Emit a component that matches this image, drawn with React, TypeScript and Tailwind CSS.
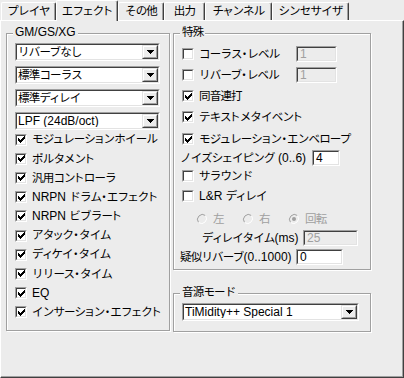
import React from 'react';

type Kids = { className?: string; inner?: string; children?: React.ReactNode };

// Small kana, the middle dot and ト are narrow in the old UI font: give those proportional metrics
const NARROW = /[・トァィゥェォャュョッ]/;

// Japanese runs get a slightly narrower setting so they match the old UI font's advance widths
const T: React.FC<{ s: string }> = ({ s }) => (
  <>
    {s.split(/([\u3000-\u9fff\uff00-\uffef]+)/).map((p, i) =>
      i % 2 ? (
        <span key={i} className="text-[11.5px] tracking-[-0.8px]">
          {Array.from(p).map((c, j) =>
            NARROW.test(c) ? (
              <span key={j} className="tracking-normal [font-feature-settings:'palt']">
                {c}
              </span>
            ) : (
              c
            )
          )}
        </span>
      ) : (
        p
      )
    )}
  </>
);

// 2px classic sunken frame (edit boxes, combo boxes, check boxes)
const Sunken: React.FC<Kids> = ({ className = '', inner = '', children }) => (
  <div className={`border border-t-[#a0a0a0] border-l-[#a0a0a0] border-r-white border-b-white ${className}`}>
    <div className={`h-full flex items-center border border-t-[#404040] border-l-[#404040] border-r-[#e3e3e3] border-b-[#e3e3e3] ${inner}`}>
      {children}
    </div>
  </div>
);

const Arrow = () => (
  <svg width="7" height="4" viewBox="0 0 7 4">
    <path d="M0 0h7v1H0z M1 1h5v1H1z M2 2h3v1H2z M3 3h1v1H3z" fill="#000" />
  </svg>
);

const Select: React.FC<{ value: string; className?: string }> = ({ value, className = '' }) => (
  <Sunken className={`h-[18px] ${className}`} inner="bg-white">
    <span className="flex-1 pl-[1px] leading-none whitespace-nowrap overflow-hidden">
      <T s={value} />
    </span>
    <div className="h-full w-[16px] border border-t-[#e3e3e3] border-l-[#e3e3e3] border-r-[#404040] border-b-[#404040]">
      <div className="h-full flex items-center justify-center bg-[#ececec] border border-t-white border-l-white border-r-[#a0a0a0] border-b-[#a0a0a0]">
        <Arrow />
      </div>
    </div>
  </Sunken>
);

const Check: React.FC<{ on?: boolean }> = ({ on }) => (
  <Sunken className="w-[12px] h-[12px] shrink-0" inner="bg-white justify-center">
    {on && (
      <svg width="7" height="7" viewBox="0 0 7 7">
        <path
          d="M0 2h1v3H0z M1 3h1v3H1z M2 4h1v3H2z M3 3h1v3H3z M4 2h1v3H4z M5 1h1v3H5z M6 0h1v3H6z"
          fill="#000"
        />
      </svg>
    )}
  </Sunken>
);

const Radio: React.FC<{ on?: boolean; label: string }> = ({ on, label }) => (
  <div className="w-[46px] flex items-center gap-[5px] text-[#a0a0a0]">
    <svg width="12" height="12" viewBox="0 0 12 12" className="shrink-0">
      <circle cx="6" cy="6" r="5" fill="#ececec" />
      <path d="M9.5 2.5A5 5 0 0 0 2.5 9.5" stroke="#a0a0a0" fill="none" />
      <path d="M2.5 9.5A5 5 0 0 0 9.5 2.5" stroke="#ffffff" fill="none" />
      {on && <circle cx="6" cy="6" r="2" fill="#a0a0a0" />}
    </svg>
    <span className="leading-none">
      <T s={label} />
    </span>
  </div>
);

const Field: React.FC<{ value: string; off?: boolean; className?: string }> = ({ value, off, className = '' }) => (
  <Sunken className={`h-[16px] ${className}`} inner={off ? 'bg-[#ececec] text-[#a0a0a0] pl-[2px]' : 'bg-white pl-[2px]'}>
    <span className="leading-none">{value}</span>
  </Sunken>
);

const Group: React.FC<Kids & { label: string }> = ({ label, className = '', children }) => (
  <div className={`relative border border-[#a0a0a0] shadow-[inset_1px_1px_0_#fff,1px_1px_0_#fff] ${className}`}>
    <span className="absolute left-[6px] top-[-9px] px-[2px] bg-[#ececec] leading-[14px] whitespace-nowrap">
      <T s={label} />
    </span>
    {children}
  </div>
);

const CheckRow: React.FC<{ label: string; on?: boolean }> = ({ label, on }) => (
  <div className="flex items-center gap-[5px]">
    <Check on={on} />
    <span className="leading-none whitespace-nowrap">
      <T s={label} />
    </span>
  </div>
);

const Label: React.FC<{ s: string; className: string }> = ({ s, className }) => (
  <span className={`${className} shrink-0 leading-none whitespace-nowrap`}>
    <T s={s} />
  </span>
);

const tabs = [
  { name: 'プレイヤ', w: 'w-[55px]' },
  { name: 'エフェクト', w: 'w-[62px]', active: true },
  { name: 'その他', w: 'w-[46px]' },
  { name: '出力', w: 'w-[41px]' },
  { name: 'チャンネル', w: 'w-[67px]' },
  { name: 'シンセサイザ', w: 'w-[77px]' },
];

const gmChecks = [
  'モジュレーションホイール',
  'ポルタメント',
  '汎用コントローラ',
  'NRPN ドラム・エフェクト',
  'NRPN ビブラート',
  'アタック・タイム',
  'ディケイ・タイム',
  'リリース・タイム',
  'EQ',
  'インサーション・エフェクト',
];

export default function App() {
  return (
    <div className="w-[404px] h-[378px] overflow-hidden bg-[#ececec] text-[12px] text-black [font-family:'Liberation_Sans','Noto_Sans_CJK_JP',sans-serif]">
      {/* Tab strip */}
      <div className="h-[20px] flex items-end pl-[1px]">
        {tabs.map((t) => (
          <div
            key={t.name}
            className={`${t.w} flex items-center justify-center rounded-t-[2px] border-t border-l border-r border-t-white border-l-white border-r-[#404040] shadow-[inset_-1px_0_0_#a0a0a0] bg-[#ececec] ${
              t.active ? 'h-[21px] -mb-px relative z-10' : 'h-[18px]'
            }`}
          >
            <span className="leading-none whitespace-nowrap">
              <T s={t.name} />
            </span>
          </div>
        ))}
      </div>

      {/* Page */}
      <div className="h-[358px] flex gap-[3px] pl-[5px] pt-[12px] border border-t-white border-l-white border-r-[#404040] border-b-[#404040] shadow-[inset_-1px_-1px_0_#a0a0a0]">
        <Group label="GM/GS/XG" className="w-[164px] h-[298px] pt-[9px] pl-[8px]">
          <div className="flex flex-col gap-[5px] w-[145px]">
            <Select value="リバーブなし" />
            <Select value="標準コーラス" />
            <Select value="標準ディレイ" />
            <Select value="LPF (24dB/oct)" />
          </div>
          <div className="flex flex-col">
            {gmChecks.map((c) => (
              <div key={c} className="h-[19.2px] flex items-center">
                <CheckRow label={c} on />
              </div>
            ))}
          </div>
        </Group>

        <div className="w-[198px] flex flex-col">
          <Group label="特殊" className="h-[237px] pt-[11px]">
            <div className="h-[18px] flex items-center ml-[8px]">
              <div className="w-[114px] shrink-0">
                <CheckRow label="コーラス・レベル" />
              </div>
              <Field value="1" off className="w-[41px]" />
            </div>
            <div className="h-[18px] mt-[3px] flex items-center ml-[8px]">
              <div className="w-[114px] shrink-0">
                <CheckRow label="リバーブ・レベル" />
              </div>
              <Field value="1" off className="w-[41px]" />
            </div>
            <div className="h-[18px] mt-[3px] flex items-center ml-[8px]">
              <CheckRow label="同音連打" on />
            </div>
            <div className="h-[18px] mt-[3px] flex items-center ml-[8px]">
              <CheckRow label="テキストメタイベント" on />
            </div>
            <div className="h-[18px] mt-[4px] flex items-center ml-[8px]">
              <CheckRow label="モジュレーション・エンベロープ" on />
            </div>
            <div className="h-[18px] mt-[1px] flex items-center ml-[6px]">
              <Label s="ノイズシェイピング (0..6)" className="w-[132px]" />
              <Field value="4" className="w-[28px]" />
            </div>
            <div className="h-[18px] flex items-center ml-[8px]">
              <CheckRow label="サラウンド" />
            </div>
            <div className="h-[18px] mt-[2px] flex items-center ml-[8px]">
              <CheckRow label="L&R ディレイ" />
            </div>
            <div className="h-[18px] mt-[5px] flex items-center ml-[22px]">
              <Radio label="左" />
              <Radio label="右" />
              <Radio label="回転" on />
            </div>
            <div className="h-[18px] mt-[1px] flex items-center ml-[28px]">
              <Label s="ディレイタイム(ms)" className="w-[101px]" />
              <Field value="25" off className="w-[55px]" />
            </div>
            <div className="h-[18px] mt-[1px] flex items-center ml-[6px]">
              <Label s="疑似リバーブ(0..1000)" className="w-[116px]" />
              <Field value="0" className="w-[47px]" />
            </div>
          </Group>

          <Group label="音源モード" className="mt-[23px] h-[39px] pt-[9px] pl-[8px]">
            <Select value="TiMidity++ Special 1" className="w-[177px]" />
          </Group>
        </div>
      </div>
    </div>
  );
}
